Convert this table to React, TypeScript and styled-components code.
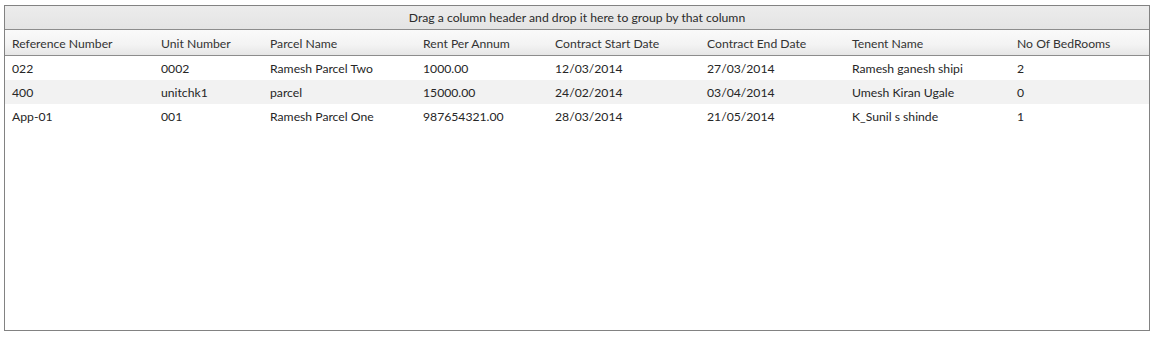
import React from "react";
import styled, { createGlobalStyle } from "styled-components";

const GlobalStyle = createGlobalStyle`
  html, body { margin: 0; padding: 0; background: #ffffff; }
  body { font-family: Lato, "Open Sans", sans-serif; }
`;

const Page = styled.div`
  padding: 5px 4px 9px 4px;
  width: 1146px;
`;

const Grid = styled.div`
  border: 1px solid #828282;
  height: 324px;
  display: flex;
  flex-direction: column;
  background: #ffffff;
  font-family: Lato, "Open Sans", sans-serif;
  font-size: 12.2px;
  color: #262626;
`;

const GroupPanel = styled.div`
  height: 23px;
  border-bottom: 1px solid #8c8c8c;
  background: linear-gradient(#ececec, #e4e4e4);
  display: flex;
  align-items: center;
  justify-content: center;
  color: #2b2b2b;
`;

const Columns = "149px 109px 153px 132px 152px 145px 165px 1fr";

const HeaderRow = styled.div`
  display: grid;
  grid-template-columns: ${Columns};
  height: 25px;
  border-bottom: 1px solid #8c8c8c;
  background: linear-gradient(#fafafa 0%, #f3f3f3 60%, #e6e6e6 100%);
`;

const HeaderCell = styled.div`
  padding: 2px 0 0 7px;
  display: flex;
  align-items: center;
  white-space: nowrap;
  color: #333333;
`;

const Row = styled.div<{ $alt?: boolean }>`
  display: grid;
  grid-template-columns: ${Columns};
  height: 24px;
  background: ${(p) => (p.$alt ? "#f2f2f2" : "#ffffff")};
`;

const Cell = styled.div`
  padding-left: 7px;
  display: flex;
  align-items: center;
  white-space: nowrap;
`;

const headers = [
  "Reference Number",
  "Unit Number",
  "Parcel Name",
  "Rent Per Annum",
  "Contract Start Date",
  "Contract End Date",
  "Tenent Name",
  "No Of BedRooms",
];

const rows = [
  ["022", "0002", "Ramesh Parcel Two", "1000.00", "12/03/2014", "27/03/2014", "Ramesh ganesh shipi", "2"],
  ["400", "unitchk1", "parcel", "15000.00", "24/02/2014", "03/04/2014", "Umesh Kiran Ugale", "0"],
  ["App-01", "001", "Ramesh Parcel One", "987654321.00", "28/03/2014", "21/05/2014", "K_Sunil s shinde", "1"],
];

export default function App() {
  return (
    <>
      <GlobalStyle />
      <Page>
        <Grid>
          <GroupPanel>Drag a column header and drop it here to group by that column</GroupPanel>
          <HeaderRow>
            {headers.map((h) => (
              <HeaderCell key={h}>{h}</HeaderCell>
            ))}
          </HeaderRow>
          {rows.map((r, i) => (
            <Row key={i} $alt={i % 2 === 1}>
              {r.map((c, j) => (
                <Cell key={j}>{c}</Cell>
              ))}
            </Row>
          ))}
        </Grid>
      </Page>
    </>
  );
}
